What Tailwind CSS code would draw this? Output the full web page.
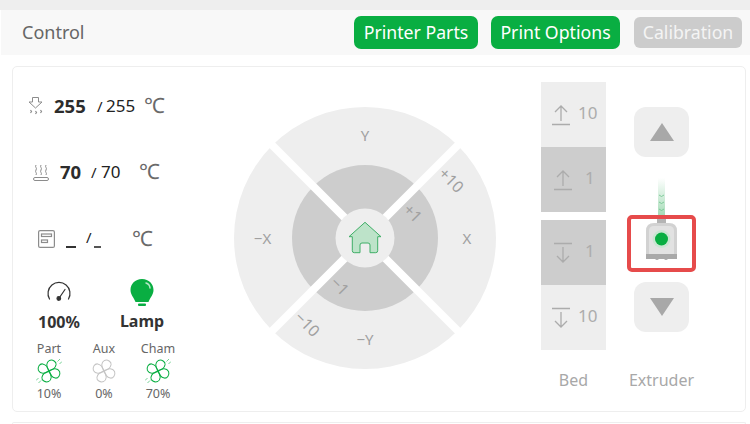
<!DOCTYPE html>
<html lang="en">
<head>
    <meta charset="UTF-8">
    <meta name="viewport" content="width=device-width, initial-scale=1.0">
    <title>Control</title>
    <script src="https://cdn.jsdelivr.net/npm/@tailwindcss/browser@4"></script>
</head>
<body class="bg-white w-[750px] h-[424px] overflow-hidden font-['Noto_Sans',sans-serif]">
    <svg class="absolute w-0 h-0">
        <defs>
            <path id="blade" d="M13 12.500C8.500 10.500 7 6 9.500 3 12 .8 16.500 1.500 17.200 4.500 17.800 8 15.500 11 13 12.500Z"/>
            <g id="fan" fill="none" stroke="currentColor" stroke-width="1" stroke-linejoin="round">
                <g transform="rotate(22 13 13)">
                    <use href="#blade"/>
                    <use href="#blade" transform="rotate(90 13 13)"/>
                    <use href="#blade" transform="rotate(180 13 13)"/>
                    <use href="#blade" transform="rotate(270 13 13)"/>
                </g>
            </g>
            <linearGradient id="filament" x1="0" y1="0" x2="0" y2="1">
                <stop offset="0" stop-color="#ffffff"/>
                <stop offset="1" stop-color="#a6dcb8"/>
            </linearGradient>
        </defs>
    </svg>

    <div class="h-[10px] bg-[#eeeeee]"></div>

    <!-- Header -->
    <div class="h-[45px] ml-px bg-[#f8f8f8] flex items-center pl-[21px] pr-[8px]">
        <span class="text-[18px] text-[#666666]">Control</span>
        <div class="ml-auto flex items-center">
            <button class="h-[33px] w-[124px] rounded-[7px] bg-[#09ae42] text-white text-[17.7px]">Printer Parts</button>
            <button class="h-[33px] w-[129px] ml-[13px] rounded-[7px] bg-[#09ae42] text-white text-[17.7px]">Print Options</button>
            <button class="h-[31px] w-[108px] ml-[14px] rounded-[6px] bg-[#cccccc] text-[#f4f4f4] text-[17.7px]">Calibration</button>
        </div>
    </div>

    <!-- Card -->
    <div class="h-[346px] mt-[11px] ml-[12px] w-[734px] border border-[#eeeeee] rounded-[5px] flex">
        <!-- Left column -->
        <div class="w-[221px] shrink-0 flex flex-col">
            <div class="h-[20px] mt-[29px] flex items-center text-[#222222]">
                <svg class="ml-[15px] w-[15px] h-[18px] text-[#8c8c8c]" viewBox="0 0 15 18" fill="none" stroke="currentColor" stroke-width="1">
                    <path d="M4.500 .5h6v4.500h3.500L7.500 11 1 5h3.500z"/>
                    <path d="M2.500 13l1 1.500-1 1.500M7.500 14l1 1.500-1 1.500M12.500 13l1 1.500-1 1.500" stroke-width="1.200"/>
                </svg>
                <span class="ml-[11px] w-[33px] text-[18.5px] font-bold text-[#2c2c2c]">255</span>
                <span class="ml-[10px] w-[9px] text-[15px]">/</span>
                <span class="w-[30px] text-[17px]">255</span>
                <span class="ml-[8px] text-[21px] text-[#6a6a6a]">℃</span>
            </div>
            <div class="h-[20px] mt-[46px] flex items-center text-[#222222]">
                <svg class="ml-[20px] w-[16px] h-[17px] text-[#8c8c8c]" viewBox="0 0 16 17" fill="none" stroke="currentColor" stroke-width="1">
                    <path d="M3 1c-1.500 2 1.500 3 0 5s1.500 3 0 5M8 1c-1.500 2 1.500 3 0 5s1.500 3 0 5M13 1c-1.500 2 1.500 3 0 5s1.500 3 0 5"/>
                    <rect x="0.500" y="13.500" width="15" height="3" rx="1.500"/>
                </svg>
                <span class="ml-[11px] w-[22px] text-[18.5px] font-bold text-[#2c2c2c]">70</span>
                <span class="ml-[9px] w-[10px] text-[15px]">/</span>
                <span class="w-[20px] text-[17px]">70</span>
                <span class="ml-[18px] text-[21px] text-[#6a6a6a]">℃</span>
            </div>
            <div class="h-[20px] mt-[47px] flex items-center text-[#222222]">
                <svg class="ml-[25px] w-[17px] h-[18px] text-[#8c8c8c]" viewBox="0 0 17 18" fill="none" stroke="currentColor" stroke-width="1.200">
                    <rect x="0.600" y="0.600" width="15.800" height="16.800" rx="1.500"/>
                    <rect x="3.500" y="4" width="10" height="2.500"/>
                    <rect x="3.500" y="10" width="6" height="2.500"/>
                </svg>
                <span class="ml-[11px] w-[10px] h-[2px] mt-[15px] bg-[#333333]"></span>
                <span class="ml-[10px] w-[8px] text-[15px] pb-[4px]">/</span>
                <span class="w-[7px] h-[2px] mt-[15px] bg-[#555555]"></span>
                <span class="ml-[31px] text-[21px] text-[#6a6a6a]">℃</span>
            </div>

            <!-- Speed and lamp -->
            <div class="mt-[29px] flex">
                <div class="ml-[21px] w-[50px] flex flex-col items-center">
                    <svg class="w-[26px] h-[24px] mt-[3px] text-[#333333]" viewBox="0 0 26 24" fill="none" stroke="currentColor" stroke-width="1.200" stroke-linecap="round">
                        <path d="M3.500 18A11 11 0 1 1 22.500 18"/>
                        <path d="M19 8.500l-5.500 8"/>
                        <circle cx="12.800" cy="17.500" r="1.800" fill="currentColor"/>
                    </svg>
                    <span class="mt-[6px] text-[16px] leading-[22px] font-bold text-[#333333]">100%</span>
                </div>
                <div class="ml-[33px] w-[50px] flex flex-col items-center">
                    <svg class="w-[26px] h-[30px] text-[#09ae42]" viewBox="0 0 26 30">
                        <path fill="currentColor" d="M13 1C6 1 1.500 6 1.500 12c0 5 3.500 7.500 5 12h13c1.500-4.500 5-7 5-12C24.500 6 20 1 13 1z"/>
                        <rect x="9" y="25.500" width="8" height="2.500" rx="1" fill="currentColor"/>
                        <path d="M17 5c2.500.8 3.800 2.600 4 5" fill="none" stroke="#ffffff" stroke-opacity="0.700" stroke-width="1.500" stroke-linecap="round"/>
                    </svg>
                    <span class="mt-[2px] text-[16px] leading-[22px] font-bold text-[#333333]">Lamp</span>
                </div>
            </div>

            <!-- Fans -->
            <div class="mt-[8px] flex text-[12.5px] leading-[16px] text-[#666666]">
                <div class="ml-[16px] w-[40px] flex flex-col items-center">
                    <span>Part</span>
                    <svg class="w-[26px] h-[26px] mt-px text-[#09ae42]" viewBox="0 0 26 26">
                        <use href="#fan"/>
                        <path d="M24 1l-2.500 2.500M26 3.500l-2.500 2.500M0 22.500l2.500-2.500M2.500 25l2.500-2.500" stroke="currentColor" stroke-width="0.800" opacity="0.700"/>
                    </svg>
                    <span class="mt-[2px]">10%</span>
                </div>
                <div class="ml-[15px] w-[40px] flex flex-col items-center">
                    <span>Aux</span>
                    <svg class="w-[26px] h-[26px] mt-px text-[#c4c4c4]" viewBox="0 0 26 26"><use href="#fan"/></svg>
                    <span class="mt-[2px]">0%</span>
                </div>
                <div class="ml-[14px] w-[40px] flex flex-col items-center">
                    <span>Cham</span>
                    <svg class="w-[26px] h-[26px] mt-px text-[#09ae42]" viewBox="0 0 26 26">
                        <use href="#fan"/>
                        <path d="M24 1l-2.500 2.500M26 3.500l-2.500 2.500M0 22.500l2.500-2.500M2.500 25l2.500-2.500" stroke="currentColor" stroke-width="0.800" opacity="0.700"/>
                    </svg>
                    <span class="mt-[2px]">70%</span>
                </div>
            </div>
        </div>

        <!-- Dial -->
        <svg class="w-[262px] h-[262px] shrink-0 mt-[40px]" viewBox="0 0 262 262" font-size="15" fill="#a0a0a0" text-anchor="middle" dominant-baseline="central">
            <circle cx="131" cy="131" r="131" fill="#eeeeee"/>
            <circle cx="131" cy="131" r="73" fill="#cdcdcd"/>
            <path d="M31 31L231 231M231 31L31 231" stroke="#ffffff" stroke-width="8"/>
            <circle cx="131" cy="131" r="29.500" fill="#eeeeee"/>
            <path d="M131 115.300L147 129.700H143.700V143.700Q143.700 145.700 141.700 145.700H136V138Q136 136 134 136H128Q126 136 126 138V145.700H120.300Q118.300 145.700 118.300 143.700V129.700H115Z" fill="#bde3c9" stroke="#3fae67" stroke-width="1" stroke-linejoin="round"/>
            <text x="131" y="28">Y</text>
            <text x="233" y="131">X</text>
            <text x="28.500" y="131">−X</text>
            <text x="131" y="232">−Y</text>
            <text x="0" y="0" font-size="16" transform="translate(217.500 73) rotate(45)">+10</text>
            <text x="0" y="0" font-size="16" transform="translate(179 106) rotate(45)">+1</text>
            <text x="0" y="0" font-size="16" transform="translate(106 179) rotate(45)">−1</text>
            <text x="0" y="0" font-size="16" transform="translate(73.500 217) rotate(45)">−10</text>
        </svg>

        <!-- Bed -->
        <div class="w-[65px] shrink-0 ml-[45px] mt-[15px] flex flex-col text-[17px] text-[#acacac]">
            <button class="h-[65px] bg-[#eeeeee] flex items-center pl-[11px]">
                <svg class="w-[18px] h-[22px]" viewBox="0 0 18 22" fill="none" stroke="currentColor" stroke-width="1.300"><path d="M9 17V2M3 8l6-6 6 6M0 20.500h18"/></svg>
                <span class="ml-[8px] pb-[3px]">10</span>
            </button>
            <button class="h-[65px] bg-[#cdcdcd] flex items-center pl-[13px]">
                <svg class="w-[18px] h-[22px]" viewBox="0 0 18 22" fill="none" stroke="currentColor" stroke-width="1.300"><path d="M9 17V2M3 8l6-6 6 6M0 20.500h18"/></svg>
                <span class="ml-[13px] pb-[3px]">1</span>
            </button>
            <button class="h-[65px] mt-[8px] bg-[#cdcdcd] flex items-center pl-[13px]">
                <svg class="w-[18px] h-[22px]" viewBox="0 0 18 22" fill="none" stroke="currentColor" stroke-width="1.300"><path d="M9 5v15M3 14l6 6 6-6M0 1.500h18"/></svg>
                <span class="ml-[13px] pb-[3px]">1</span>
            </button>
            <button class="h-[65px] bg-[#eeeeee] flex items-center pl-[11px]">
                <svg class="w-[18px] h-[22px]" viewBox="0 0 18 22" fill="none" stroke="currentColor" stroke-width="1.300"><path d="M9 5v15M3 14l6 6 6-6M0 1.500h18"/></svg>
                <span class="ml-[8px] pb-[3px]">10</span>
            </button>
            <span class="mt-[19px] text-center text-[16px] leading-[22px] text-[#a8a8a8]">Bed</span>
        </div>

        <!-- Extruder -->
        <div class="w-[69px] shrink-0 ml-[21px] mt-[40px] flex flex-col items-center">
            <button class="w-[55px] h-[50px] rounded-[12px] bg-[#eeeeee] flex items-center justify-center">
                <svg class="w-[24px] h-[18px]" viewBox="0 0 24 18"><path d="M12 0L24 18H0z" fill="#a8a8a8"/></svg>
            </button>
            <svg class="mt-[21px] w-[9px] h-[37px]" viewBox="0 0 9 37">
                <rect x="1" width="7" height="37" fill="url(#filament)"/>
                <path d="M2 17l2.500 1.500L7 17M2 24l2.500 1.500L7 24M2 31l2.500 1.500L7 31" fill="none" stroke="#6cc28b" stroke-width="0.800"/>
            </svg>
            <div class="w-[69px] h-[57px] border-[4px] border-[#e64b4b] rounded-[5px] bg-white flex flex-col items-center">
                <svg class="w-[31px] h-[44px]" viewBox="0 0 31 44">
                    <rect x="11" width="9" height="6" fill="#b4b4b4"/>
                    <path d="M0 12Q0 4 8 4H23Q31 4 31 12V38H0Z" fill="#d2d2d2"/>
                    <path d="M3 12Q3 7 8 7H23Q28 7 28 12V35H3Z" fill="#e2e2e2"/>
                    <path d="M0 35H31V40H22Q20 42 18 40H13Q11 42 9 40H0Z" fill="#a9a9a9"/>
                    <circle cx="15.500" cy="20" r="9" fill="#c9e6d2"/>
                    <circle cx="15.500" cy="20" r="6.500" fill="#09ae42"/>
                </svg>
            </div>
            <button class="mt-[10px] w-[55px] h-[50px] rounded-[12px] bg-[#eeeeee] flex items-center justify-center">
                <svg class="w-[24px] h-[18px]" viewBox="0 0 24 18"><path d="M12 18L24 0H0z" fill="#a8a8a8"/></svg>
            </button>
            <span class="mt-[37px] text-[16px] leading-[22px] text-[#a8a8a8] whitespace-nowrap">Extruder</span>
        </div>
    </div>

    <!-- Next card -->
    <div class="h-[2px] mt-[10px] ml-[12px] w-[734px] border border-b-0 border-[#eeeeee] rounded-t-[5px]"></div>
</body>
</html>
